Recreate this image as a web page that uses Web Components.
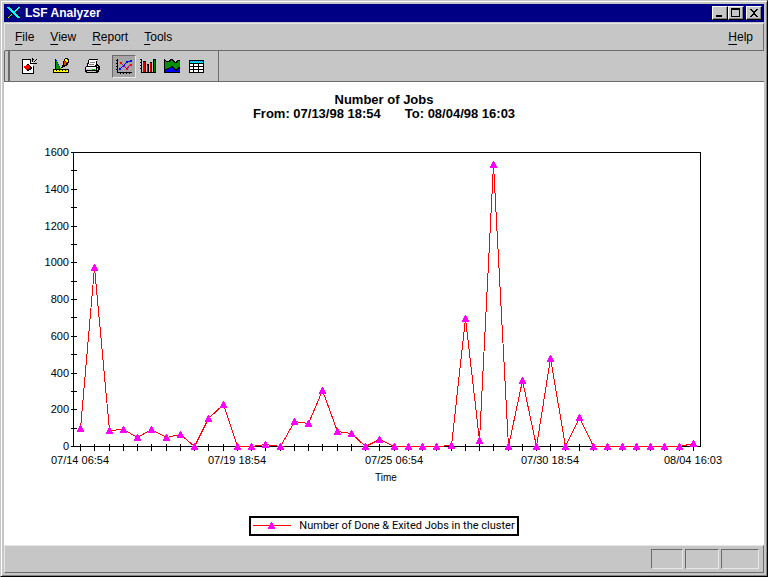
<!DOCTYPE html>
<html lang="en">
<head>
<meta charset="utf-8">
<meta name="viewport" content="width=device-width, initial-scale=1">
<title>LSF Analyzer</title>
<style>
    body {
        margin: 0;
        background: #c6c6c6;
        color: #000;
        font: 12px/14px "Liberation Sans", Arial, sans-serif;
    }
</style>
</head>
<body>

<app-window caption="LSF Analyzer">
    <menu-bar slot="menu">
        <menu-item label="File"></menu-item>
        <menu-item label="View"></menu-item>
        <menu-item label="Report"></menu-item>
        <menu-item label="Tools"></menu-item>
        <menu-item slot="end" label="Help"></menu-item>
    </menu-bar>
    <tool-bar slot="tools">
        <tool-button icon="report" label="New report"></tool-button>
        <tool-button icon="design" label="Design"></tool-button>
        <tool-button icon="print" label="Print"></tool-button>
        <tool-button slot="views" icon="line" label="Line chart" pressed></tool-button>
        <tool-button slot="views" icon="bar" label="Bar chart"></tool-button>
        <tool-button slot="views" icon="area" label="Area chart"></tool-button>
        <tool-button slot="views" icon="table" label="Table"></tool-button>
    </tool-bar>
    <job-report>
        <span slot="title">Number of Jobs</span>
        <span slot="from">From: 07/13/98 18:54</span>
        <span slot="to">To: 08/04/98 16:03</span>
        <line-chart axis="Time" max="1600"></line-chart>
        <chart-legend slot="legend">Number of Done &amp; Exited Jobs in the cluster</chart-legend>
    </job-report>
    <status-bar slot="status"></status-bar>
</app-window>

<script>
"use strict";

// Attach an open shadow root and fill it
function render(host, html) {
    host.attachShadow({ mode: "open" }).innerHTML = html;
    return host.shadowRoot;
}

// --- Icons: all drawn on a 16 x 16 pixel grid ---
const ICONS = {
    report: `
        <path fill="#fff" d="M1 2h8v2h2v11H1z"/>
        <path fill="#000" d="M0 1h9v1H1v13h10V8h1v8H0zM8 2h1v3h3v1H8zM4 7h1V6h2v1h1v1h1v1h1v2H9v1H7v1H5v-1H4z"/>
        <path fill="#f00" d="M4 7h3v1h1v2H7v1H5v1H4v-1H3v-1H2V8h2z"/>
        <path fill="#000" d="M10 4h1V2h1V1h-1V0h-1zM12 3h1v1h-1zM13 2h1v1h-1zM14 1h1v1h-1zM12 5h3v1h-3z"/>`,
    design: `
        <path fill="#00f" d="M2 1h1v1h1v2h1v2h1v2h1v2h1v1H2z"/>
        <path fill="#009000" d="M3 3h1v2h1v2h1v2h1v1h1v1H3z"/>
        <path fill="#000" d="M2 1h1v10H2zM9 8h1v1H9zM10 3h1V1h1V0h3v1h1v4h-1v2h-1v1h-2v1h-2v1H8V9h1V7h1z"/>
        <path fill="#ff0" d="M12 1h2v1h1v2h-2V3h-1z"/>
        <path fill="#e04000" d="M11 3h1v1h2v1h-1v2h-2z"/>
        <path fill="#000" d="M0 11h16v4H0z"/>
        <path fill="#ff0" d="M1 12h14v2H1z"/>
        <path fill="#000" d="M3 12h1v1H3zM6 12h1v1H6zM9 12h1v1H9zM12 12h1v1h-1z"/>`,
    print: `
        <path fill="#000" d="M5 1h9v1h-1v4h1v1h1v1h1v4h-1v2h-1v1H2v-1H1V9h1V8h1V5h1V2h1z"/>
        <path fill="#fff" d="M5 2h8v1h-1v4h-1v1H4V6h1z"/>
        <path fill="#808080" d="M6 4h5v1H6zM5 6h5v1H5z"/>
        <path fill="#fff" d="M2 9h10v1H2z"/>
        <path fill="#e8e8e8" d="M2 10h10v1H2zM13 8h1v1h-1z"/>
        <path fill="#c6c6c6" d="M2 11h10v1H2zM3 13h9v1H3zM13 10h1v2h-1z"/>
        <path fill="#0c0" d="M8 11h3v1H8z"/>`,
    line: `
        <path fill="#000" d="M1 1h1v13h14v1H1zM0 2h1v1H0zM0 5h1v1H0zM0 8h1v1H0zM0 11h1v1H0zM4 15h1v1H4zM7 15h1v1H7zM10 15h1v1h-1zM13 15h1v1h-1z"/>
        <path stroke="#00f" fill="none" d="M4 11 7 8 11 4 15 3"/>
        <path fill="#00f" d="M3 10h2v2H3zM7 7h2v2H7zM10 3h2v2h-2zM14 2h2v2h-2z"/>
        <path stroke="#c00080" fill="none" d="M5 5 11 11 14 7"/>
        <path fill="#f00" d="M4 4h2v2H4zM10 10h2v2h-2zM14 6h2v2h-2z"/>`,
    bar: `
        <path fill="#000" d="M1 1h1v13h14v1H1zM0 1h1v1H0zM0 4h1v1H0zM0 7h1v1H0zM0 10h1v1H0zM3 3h3v11H3zM7 6h2v8H7zM10 4h2v10h-2zM13 1h3v13h-3z"/>
        <path fill="#e00000" d="M3 4h2v10H3zM10 5h1v9h-1z"/>
        <path fill="#008000" d="M7 7h1v7H7zM14 2h1v12h-1z"/>`,
    area: `
        <path fill="#000" d="M0 1h1v1h1v1h3V2h1V1h3v1h1v1h1v1h1V3h1V2h3v13H0z"/>
        <path fill="#009000" d="M1 3h1v1h4V3h1V2h1v1h1v1h1v1h3V4h1V3h2v6h-2v1h-1v1h-2v-1h-1V9H9V8H7v1H5v1H3v1H1z"/>
        <path fill="#00f" d="M1 12h2v-1h2v-1h2V9h1v1h1v1h1v1h1v1h2v-1h1v-1h2v3H1z"/>`,
    table: `
        <path fill="#000" d="M1 2h15v13H1z"/>
        <path fill="#08f" d="M2 3h13v2H2z"/>
        <path fill="#0ff" d="M3 3h1v1H3zM5 3h1v1H5zM7 3h1v1H7zM9 3h1v1H9zM11 3h1v1h-1zM13 3h1v1h-1zM2 4h1v1H2zM4 4h1v1H4zM6 4h1v1H6zM8 4h1v1H8zM10 4h1v1h-1zM12 4h1v1h-1zM14 4h1v1h-1z"/>
        <path fill="#fff" d="M2 6h3v2H2zM6 6h4v2H6zM11 6h4v2h-4zM2 9h3v2H2zM6 9h4v2H6zM11 9h4v2h-4zM2 12h3v2H2zM6 12h4v2H6zM11 12h4v2h-4z"/>`,
    logo: `
        <path fill="#000" d="M0 2h5l3 4 4-4h3l-5 6 5 5h-5L7 9l-3 4H0l5-6z"/>
        <path fill="#0ff" d="M1 2h3l10 11h-3zM12 2h2L9 7H8zM6 9l-3 4H1l4-4z"/>
        <path fill="#ff0" d="M2 12h1v1H2zM11 3h1v1h-1z"/>`,
    minimize: `<path fill="#000" d="M4 10h6v2H4z"/>`,
    maximize: `<path fill="#000" fill-rule="evenodd" d="M3 3h9v9H3zM4 5v6h7V5z"/>`,
    close: `<path fill="#000" d="M4 4h2v1h1v1h2V5h1V4h2v1h-1v1h-1v1H9v2h1v1h1v1h1v1h-2v-1H9v-1H7v1H6v1H4v-1h1v-1h1V9h1V7H6V6H5V5H4z"/>`
};

class PixelIcon extends HTMLElement {
    constructor() {
        super();
        render(this, `
            <style>
                :host { display: block; width: 16px; height: 16px; }
                svg { display: block; }
            </style>
            <svg width="16" height="16" viewBox="0 0 16 16" shape-rendering="crispEdges" aria-hidden="true">${ICONS[this.getAttribute("name")] || ""}</svg>
        `);
    }
}

// --- Window frame with caption bar ---
class AppWindow extends HTMLElement {
    constructor() {
        super();
        const caption = this.getAttribute("caption");
        render(this, `
            <style>
                :host {
                    display: flex;
                    flex-direction: column;
                    box-sizing: border-box;
                    min-height: 100vh;
                    padding: 3px;
                    border: 1px solid;
                    border-color: #c6c6c6 #000 #000 #c6c6c6;
                    box-shadow: inset 1px 1px #fff, inset -1px -1px #848484;
                    background: #c6c6c6;
                }
                header {
                    display: flex;
                    align-items: center;
                    height: 18px;
                    padding: 0 2px;
                    margin-bottom: 1px;
                    background: #000084;
                    color: #fff;
                }
                h1 { flex: 1; margin: 0 0 0 3px; font-size: 12px; line-height: 18px; }
                button {
                    width: 16px;
                    height: 14px;
                    padding: 0;
                    overflow: hidden;
                    border: 1px solid;
                    border-color: #fff #000 #000 #fff;
                    box-shadow: inset -1px -1px #848484;
                    background: #c6c6c6;
                }
                button pixel-icon { margin: -2px 0 0 -1px; }
                .close { margin-left: 2px; }
                main { display: flex; flex: 1; flex-direction: column; }
            </style>
            <header>
                <pixel-icon name="logo"></pixel-icon>
                <h1>${caption}</h1>
                <button aria-label="Minimize"><pixel-icon name="minimize"></pixel-icon></button>
                <button aria-label="Maximize"><pixel-icon name="maximize"></pixel-icon></button>
                <button class="close" aria-label="Close"><pixel-icon name="close"></pixel-icon></button>
            </header>
            <slot name="menu"></slot>
            <slot name="tools"></slot>
            <main><slot></slot></main>
            <slot name="status"></slot>
        `);
    }
}

class MenuBar extends HTMLElement {
    constructor() {
        super();
        render(this, `
            <style>
                :host { display: block; }
                nav {
                    display: flex;
                    justify-content: space-between;
                    padding: 0 2px;
                    border: 1px solid;
                    border-color: #e7e7e7 #6b6b6b #6b6b6b #e7e7e7;
                }
                div { display: flex; }
            </style>
            <nav>
                <div><slot></slot></div>
                <div><slot name="end"></slot></div>
            </nav>
        `);
    }
}

// The first letter of the label is its access key
class MenuItem extends HTMLElement {
    constructor() {
        super();
        const label = this.getAttribute("label");
        render(this, `
            <style>
                :host { display: block; }
                button {
                    height: 26px;
                    padding: 0 8px;
                    border: 0;
                    background: none;
                    color: inherit;
                    font: inherit;
                }
                u { text-underline-offset: 3px; text-decoration-thickness: 1px; }
            </style>
            <button accesskey="${label[0].toLowerCase()}"><u>${label[0]}</u>${label.slice(1)}</button>
        `);
    }
}

class ToolBar extends HTMLElement {
    constructor() {
        super();
        render(this, `
            <style>
                :host { display: flex; border-bottom: 1px solid #6b6b6b; }
                .grip, .tools {
                    border: solid;
                    border-width: 0 1px;
                    border-color: #e7e7e7 #6b6b6b;
                }
                .grip { width: 3px; }
                .tools { display: flex; align-items: center; height: 30px; padding: 0 10px 0 8px; }
                .group { display: flex; gap: 7px; }
                .views { gap: 0; margin-left: 8px; }
            </style>
            <div class="grip"></div>
            <div class="tools" role="toolbar" aria-label="Tools">
                <div class="group"><slot></slot></div>
                <div class="group views"><slot name="views"></slot></div>
            </div>
        `);
    }
}

class ToolButton extends HTMLElement {
    constructor() {
        super();
        render(this, `
            <style>
                :host { display: block; }
                button {
                    display: block;
                    width: 24px;
                    height: 23px;
                    padding: 2px 3px;
                    border: 1px solid transparent;
                    background: none;
                }
                :host([pressed]) button {
                    border-color: #6b6b6b #e7e7e7 #e7e7e7 #6b6b6b;
                    background: #a5a5a5;
                }
            </style>
            <button aria-label="${this.getAttribute("label")}" aria-pressed="${this.hasAttribute("pressed")}">
                <pixel-icon name="${this.getAttribute("icon")}"></pixel-icon>
            </button>
        `);
    }
}

class JobReport extends HTMLElement {
    constructor() {
        super();
        render(this, `
            <style>
                :host {
                    display: flex;
                    flex: 1;
                    flex-direction: column;
                    padding: 11px 0 9px;
                    background: #fff;
                }
                h2 { margin: 0; font-size: 13px; line-height: 14px; text-align: center; }
                .range { display: flex; justify-content: center; gap: 24px; }
                .legend { display: flex; justify-content: center; }
            </style>
            <h2>
                <slot name="title"></slot>
                <div class="range"><slot name="from"></slot><slot name="to"></slot></div>
            </h2>
            <slot></slot>
            <div class="legend"><slot name="legend"></slot></div>
        `);
    }
}

// --- Chart data: one point for every 12 hours ---
const JOBS = [
    98, 975, 88, 94, 50, 94, 50, 65, 0, 154, 230, 0, 0, 10, 0,
    135, 125, 305, 80, 70, 0, 38, 0, 0, 0, 0, 5, 695, 33, 1533,
    0, 360, 0, 478, 0, 157, 0, 0, 0, 0, 0, 0, 0, 15
];

const TIMES = {
    0: "07/14 06:54",
    11: "07/19 18:54",
    22: "07/25 06:54",
    33: "07/30 18:54",
    43: "08/04 16:03"
};

const MARKER = "M0-3h1v1h1v2h1v2h1v2h-7v-2h1v-2h1v-2h1z";
const MARGIN = { top: 31, right: 64, bottom: 70, left: 69 };

class LineChart extends HTMLElement {
    constructor() {
        super();
        render(this, `
            <style>
                :host { display: block; flex: 1; min-height: 200px; position: relative; }
                svg { position: absolute; inset: 0; width: 100%; height: 100%; }
                text { font-size: 11px; text-anchor: middle; }
                .value { text-anchor: end; }
                .name { font-size: 10px; }
                .axis { fill: none; stroke: #000; }
                .series { fill: none; stroke: #f00; }
                .marker { fill: #f0f; }
            </style>
            <svg role="img" aria-label="Number of jobs over time"></svg>
        `);
    }

    connectedCallback() {
        this.draw();
        new ResizeObserver(() => this.draw()).observe(this);
    }

    draw() {
        const right = this.clientWidth - MARGIN.right;
        const bottom = this.clientHeight - MARGIN.bottom;
        const { left, top } = MARGIN;
        const max = Number(this.getAttribute("max"));
        const step = (right - left) / JOBS.length;
        const x = i => Math.round(left + step * (i + 0.5));
        const y = v => Math.round(bottom - (bottom - top) * v / max);

        let axis = `M${left} ${top}H${right}V${bottom}H${left}z`;
        let labels = "";
        for (let v = 0; v <= max; v += 100) {
            axis += `M${left - 3} ${y(v)}h6`;
            if (v % 200 === 0) {
                labels += `<text class="value" x="${left - 4}" y="${y(v) + 4}">${v}</text>`;
            }
        }
        JOBS.forEach((v, i) => { axis += `M${x(i)} ${bottom - 3}v7`; });
        for (const i in TIMES) {
            labels += `<text x="${x(Number(i))}" y="${bottom + 18}">${TIMES[i]}</text>`;
        }
        labels += `<text class="name" x="${Math.floor((left + right) / 2)}" y="${bottom + 35}">${this.getAttribute("axis")}</text>`;

        const line = JOBS.map((v, i) => `${x(i)},${y(v)}`).join(" ");
        const markers = JOBS.map((v, i) => `<path d="${MARKER}" transform="translate(${x(i)} ${y(v)})"/>`).join("");

        // half a pixel puts one-pixel strokes on the grid
        this.shadowRoot.querySelector("svg").innerHTML = `
            <g shape-rendering="crispEdges">
                <path class="axis" transform="translate(.5 .5)" d="${axis}"/>
                <polyline class="series" transform="translate(.5 .5)" points="${line}"/>
                <g class="marker">${markers}</g>
            </g>
            ${labels}
        `;
    }
}

class ChartLegend extends HTMLElement {
    constructor() {
        super();
        render(this, `
            <style>
                :host {
                    display: flex;
                    align-items: center;
                    gap: 8px;
                    height: 16px;
                    padding: 0 2px;
                    border: 2px solid #000;
                    font: 11px/16px Roboto, "Liberation Sans", sans-serif;
                }
                svg { display: block; }
            </style>
            <svg width="38" height="16" shape-rendering="crispEdges" aria-hidden="true">
                <path fill="#f00" d="M0 7h38v1H0z"/>
                <path fill="#f0f" transform="translate(18 7)" d="${MARKER}"/>
            </svg>
            <slot></slot>
        `);
    }
}

class StatusBar extends HTMLElement {
    constructor() {
        super();
        render(this, `
            <style>
                :host {
                    display: flex;
                    justify-content: flex-end;
                    gap: 2px;
                    padding: 3px 4px 3px 0;
                    border: 1px solid;
                    border-color: #e7e7e7 #6b6b6b #6b6b6b #e7e7e7;
                }
                div {
                    box-sizing: border-box;
                    width: 32px;
                    height: 20px;
                    border: 1px solid;
                    border-color: #6b6b6b #e7e7e7 #e7e7e7 #6b6b6b;
                }
                .mid { width: 34px; }
                .wide { width: 38px; }
            </style>
            <div></div>
            <div class="mid"></div>
            <div class="wide"></div>
        `);
    }
}

customElements.define("pixel-icon", PixelIcon);
customElements.define("menu-item", MenuItem);
customElements.define("menu-bar", MenuBar);
customElements.define("tool-button", ToolButton);
customElements.define("tool-bar", ToolBar);
customElements.define("line-chart", LineChart);
customElements.define("chart-legend", ChartLegend);
customElements.define("job-report", JobReport);
customElements.define("status-bar", StatusBar);
customElements.define("app-window", AppWindow);
</script>
</body>
</html>
